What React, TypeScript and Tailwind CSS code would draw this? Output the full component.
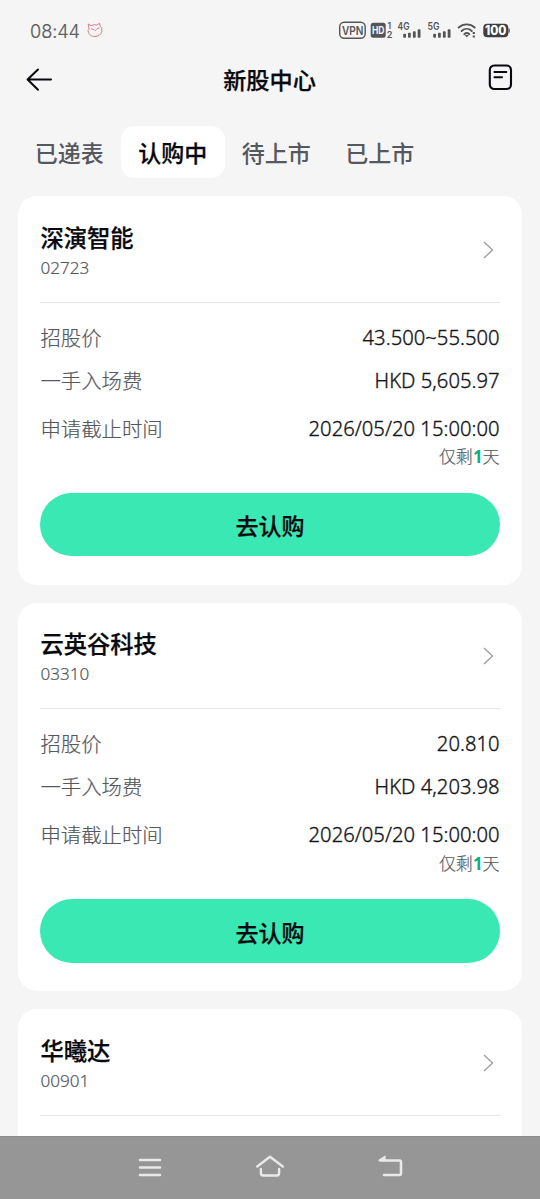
import React from "react";

type Stock = { name: string; code: string; price?: string; fee?: string };

const stocks: Stock[] = [
  { name: "深演智能", code: "02723", price: "43.500~55.500", fee: "HKD 5,605.97" },
  { name: "云英谷科技", code: "03310", price: "20.810", fee: "HKD 4,203.98" },
  { name: "华曦达", code: "00901" },
];

const tabs = ["已递表", "认购中", "待上市", "已上市"];

function Signal({ label }: { label: string }) {
  return (
    <svg width="24" height="19" viewBox="0 0 24 19" fill="#555">
      <text x="0" y="9" fontSize="10.5" fontWeight="600" fontFamily="Inter, sans-serif" textLength="12" lengthAdjust="spacingAndGlyphs">{label}</text>
      <rect x="5.7" y="13.3" width="2.8" height="4" rx="0.8" />
      <rect x="10.5" y="12.2" width="2.8" height="5.1" rx="0.8" />
      <rect x="15.4" y="10.8" width="2.8" height="6.5" rx="0.8" />
      <rect x="20.2" y="8.7" width="2.8" height="8.6" rx="0.8" />
    </svg>
  );
}

function StatusBar() {
  return (
    <div className="flex h-[54px] shrink-0 items-center pt-[7px] pl-[30px] pr-[29px] text-[#5c5c5c]">
      <span className="w-[57px] font-['Inter',sans-serif] text-[18.2px] leading-6 font-light tracking-[-0.1px] whitespace-nowrap [-webkit-text-stroke:0.2px_#5c5c5c]">08:44</span>
      <svg className="mt-[-1px]" width="17" height="17" viewBox="0 0 17 17" fill="none" stroke="#dc7d88" strokeWidth="1" strokeLinejoin="round" strokeLinecap="round">
        <path d="M1.5 2.2 4 3.700Q7 2.200 10.500 3L12.500 1l.7 3.200c1.600 1.500 2 3.300 1.500 5.300-.7 3.300-3.200 5-6.700 5-3.700 0-6.200-1.700-6.300-4.200L.8 8.800l1-1.300Z" />
        <path d="M4.500 6.800 6.500 7.400M10 6.800l2-.8M7.700 8.100l1 .5.700-.8" />
      </svg>
      <svg className="ml-auto" width="172" height="22" viewBox="0 0 172 22" fill="none">
        <rect x="0.7" y="2.3" width="25.5" height="16" rx="4.5" stroke="#555" strokeWidth="1.4" />
        <text x="2.9" y="14.6" fontSize="11.5" fontWeight="600" fontFamily="Inter, sans-serif" fill="#555" textLength="21.5" lengthAdjust="spacingAndGlyphs">VPN</text>
        <rect x="31.7" y="2.8" width="15" height="15" rx="2.5" fill="#555" />
        <text x="33" y="14" fontSize="10" fontWeight="700" fontFamily="Inter, sans-serif" fill="#f4f4f5" textLength="12.5" lengthAdjust="spacingAndGlyphs">HD</text>
        <text x="48.6" y="9" fontSize="8.5" fontWeight="600" fontFamily="Inter, sans-serif" fill="#555">1</text>
        <text x="47.8" y="18" fontSize="9" fontWeight="600" fontFamily="Inter, sans-serif" fill="#555">2</text>
        <g transform="translate(58.5 0.5)"><Signal label="4G" /></g>
        <g transform="translate(88.5 0.5)"><Signal label="5G" /></g>
        <g stroke="#555" strokeWidth="1.9" strokeLinecap="round">
          <path d="M119.7 7.500c4.500-4.200 11.500-4.200 16 0M122.600 11c3-2.800 7.200-2.800 10.200 0M125.300 14.200c1.600-1.400 3.400-1.400 5 0" />
        </g>
        <path d="m125.800 15 2 2.500 2-2.500ZM133.700 12h2.200v2h-2.200ZM133.700 15.500h2.200v2h-2.200Z" fill="#555" />
        <rect x="144.3" y="3.8" width="25" height="13.5" rx="4" fill="#3f3f42" />
        <path d="M169.500 8q1.300 0 1.300 2.500t-1.300 2.500Z" fill="#3f3f42" />
        <text x="146" y="14.9" fontSize="12.5" fontWeight="800" fontFamily="Inter, sans-serif" fill="#fff" textLength="21.5" lengthAdjust="spacingAndGlyphs">100</text>
      </svg>
    </div>
  );
}

function Header() {
  return (
    <header className="flex h-[52px] shrink-0 items-center justify-between pl-[26px] pr-[27px]">
      <svg className="-mt-px" width="27" height="24" viewBox="0 0 27 24" fill="none" stroke="#08090f" strokeWidth="2" strokeLinejoin="round" strokeLinecap="round">
        <path d="M25 11.500H1.800M12 1.500 1.600 11.500 12 21.700" />
      </svg>
      <h1 className="-ml-[2px] text-[23.2px] leading-8 font-medium text-[#08090f] [-webkit-text-stroke:0.25px_#08090f]">新股中心</h1>
      <svg className="-mt-[7px]" width="25" height="28" viewBox="0 0 25 28" fill="none" stroke="#08090f" strokeWidth="2.1" strokeLinecap="round">
        <rect x="1.8" y="2.5" width="21.2" height="23.5" rx="4.5" />
        <path d="M6.500 9h11.800M6.500 14.200h7.500" />
      </svg>
    </header>
  );
}

function Row({ label, value }: { label: string; value: string }) {
  return (
    <div className="flex justify-between text-[20.4px] leading-8">
      <span className="font-light text-[#55585e] [-webkit-text-stroke:0.2px_#55585e]">{label}</span>
      <span className="-mt-px font-['Noto_Sans',sans-serif] text-[20.2px] font-light tracking-[0.03px] text-[#15161a] [-webkit-text-stroke:0.35px_#15161a]">{value}</span>
    </div>
  );
}

function StockHeading({ stock }: { stock: Stock }) {
  return (
    <div className="flex h-[106.5px] items-center justify-between border-b border-[#e8e8e9]">
      <div className="pt-[3px]">
        <h2 className="text-[23.3px] leading-[34px] font-medium text-[#08090f] [-webkit-text-stroke:0.25px_#08090f]">{stock.name}</h2>
        <p className="font-['Noto_Sans',sans-serif] text-[17.1px] leading-[25px] font-light text-[#55585e] [-webkit-text-stroke:0.2px_#55585e]">{stock.code}</p>
      </div>
      <svg className="mr-[5px] mt-[2px]" width="13" height="20" viewBox="0 0 13 20" fill="none" stroke="#a0a0a3" strokeWidth="1.4">
        <path d="m2 2 8.500 8L2 18" />
      </svg>
    </div>
  );
}

function StockCard({ stock }: { stock: Stock }) {
  if (!stock.price || !stock.fee) {
    return (
      <section className="flex-1 rounded-t-[19px] bg-white px-[22.4px]">
        <StockHeading stock={stock} />
      </section>
    );
  }
  return (
    <section className="h-[388.5px] shrink-0 rounded-[19px] bg-white px-[22.4px]">
      <StockHeading stock={stock} />
      <div className="pt-[19.2px]">
        <Row label="招股价" value={stock.price} />
        <div className="pt-[11px]"><Row label="一手入场费" value={stock.fee} /></div>
        <div className="pt-[15.9px]"><Row label="申请截止时间" value="2026/05/20 15:00:00" /></div>
        <p className="-mt-[0.5px] text-right text-[17px] leading-[26px] font-light text-[#55585e] [-webkit-text-stroke:0.15px_#55585e]">仅剩<b className="font-['Noto_Sans',sans-serif] font-bold text-[#10b07c] [-webkit-text-stroke:0px]">1</b>天</p>
      </div>
      <button className="mt-[22.6px] flex h-[63.5px] w-full items-center justify-center rounded-full bg-[#3ae8b4] pt-1 text-[23px] font-medium text-[#08090f] [-webkit-text-stroke:0.25px_#08090f]">去认购</button>
    </section>
  );
}

function NavigationBar() {
  return (
    <nav className="flex h-[63px] shrink-0 items-center justify-center gap-[90px] border-t border-[#8c8c8c] bg-[#969696] text-[#e9e9e9]">
      <svg width="30" height="26" viewBox="0 0 30 26" fill="none" stroke="currentColor" strokeWidth="2.6" strokeLinecap="round">
        <path d="M5 5h20M5 12.500h20M5 20h20" />
      </svg>
      <svg width="30" height="26" viewBox="0 0 30 26" fill="none" stroke="currentColor" strokeWidth="2.4" strokeLinecap="round" strokeLinejoin="round">
        <path d="M2.200 11.500 15 1.800 27.800 11.500M5.900 14v4.200q0 2.300 2.500 2.300h13.200q2.500 0 2.500-2.300V14" />
      </svg>
      <svg width="30" height="26" viewBox="0 0 30 26" fill="none" stroke="currentColor" strokeWidth="2.6" strokeLinecap="round" strokeLinejoin="round">
        <path d="M5 5.500h19.500q1.500 0 1.500 1.500v11.500q0 1.500-1.500 1.500H9" />
        <path d="M4 5.200 10 1.200v4Z" fill="currentColor" strokeWidth="1.2" />
      </svg>
    </nav>
  );
}

export default function App() {
  return (
    <div className="flex h-[1199px] w-[540px] flex-col overflow-hidden bg-[#f5f5f6] font-['Lato','Noto_Sans_CJK_SC',sans-serif]">
      <StatusBar />
      <Header />
      <div className="flex h-[90px] shrink-0 items-start pt-[20px] pl-[17.5px]">
        {tabs.map((tab, i) => (
          <div
            key={tab}
            className={
              i === 1
                ? "flex h-[52px] w-[103.5px] items-center justify-center rounded-[14px] bg-white pt-[2px] text-[23px] font-medium text-[#08090f] [-webkit-text-stroke:0.25px_#08090f]"
                : "flex h-[52px] w-[103.5px] items-center justify-center pt-[2px] text-[23px] font-medium text-[#55585e]"
            }
          >
            {tab}
          </div>
        ))}
      </div>
      <main className="flex min-h-0 flex-1 flex-col gap-[18px] px-[18px]">
        {stocks.map((stock) => (
          <StockCard key={stock.code} stock={stock} />
        ))}
      </main>
      <NavigationBar />
    </div>
  );
}
